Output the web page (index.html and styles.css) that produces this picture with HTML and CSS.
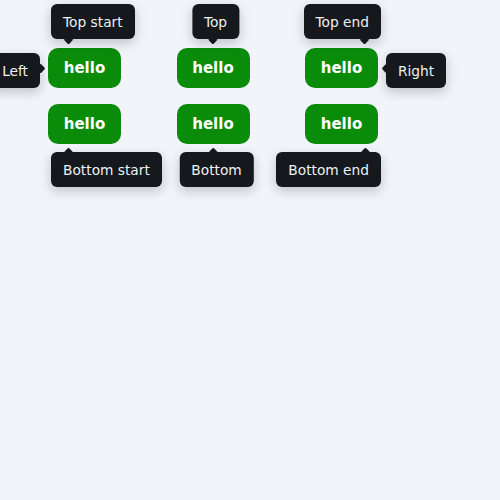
FILE: index.html
```html
<!DOCTYPE html>
<html>
<head>
<meta charset="utf-8">
<link rel="stylesheet" href="styles.css">
</head>
<body>
<div class="grid">
  <div class="cell">
    <button class="btn">hello</button>
    <div class="tip tip-left">Left</div>
    <div class="tip tip-top-start">Top start</div>
  </div>
  <div class="cell">
    <button class="btn">hello</button>
    <div class="tip tip-top">Top</div>
  </div>
  <div class="cell">
    <button class="btn">hello</button>
    <div class="tip tip-top-end">Top end</div>
    <div class="tip tip-right">Right</div>
  </div>
  <div class="cell">
    <button class="btn">hello</button>
    <div class="tip tip-bottom-start">Bottom start</div>
  </div>
  <div class="cell">
    <button class="btn">hello</button>
    <div class="tip tip-bottom">Bottom</div>
  </div>
  <div class="cell">
    <button class="btn">hello</button>
    <div class="tip tip-bottom-end">Bottom end</div>
  </div>
</div>
</body>
</html>
```

FILE: styles.css
```css
html, body {
  margin: 0;
  padding: 0;
  background: #f1f4f8;
  width: 500px;
  height: 500px;
  overflow: hidden;
  font-family: "DejaVu Sans", "Noto Sans", sans-serif;
}

.grid {
  display: grid;
  grid-template-columns: repeat(3, 73px);
  column-gap: 55.5px;
  row-gap: 16px;
  padding: 48px 0 0 48px;
}

.cell {
  position: relative;
}

.btn {
  display: block;
  box-sizing: border-box;
  width: 73px;
  height: 40px;
  padding: 1px 0 0;
  border: none;
  border-radius: 10px;
  background: #0a8c0a;
  color: #ffffff;
  text-align: center;
  font-family: "DejaVu Sans", "Noto Sans", sans-serif;
  font-weight: bold;
  font-size: 15px;
  line-height: 39px;
}

.tip {
  position: absolute;
  box-sizing: border-box;
  height: 35px;
  padding: 1px 12px 0;
  border-radius: 6px;
  background: #15191e;
  color: #eef0f2;
  font-size: 13.75px;
  line-height: 34px;
  white-space: nowrap;
  box-shadow: 0 4px 12px rgba(15, 23, 42, 0.22);
  z-index: 2;
}

.tip::after {
  content: "";
  position: absolute;
  width: 7px;
  height: 7px;
  background: #15191e;
  border-radius: 1.5px;
  transform: rotate(45deg);
}

/* top */
.tip-top-start { left: 3px; bottom: calc(100% + 9px); }
.tip-top { left: calc(50% + 2.5px); transform: translateX(-50%); bottom: calc(100% + 9px); }
.tip-top-end { right: -3px; bottom: calc(100% + 9px); }
.tip-top-start::after,
.tip-top::after,
.tip-top-end::after { bottom: -3.5px; }
.tip-top-start::after { left: 13.5px; }
.tip-top::after { left: calc(50% - 6px); }
.tip-top-end::after { right: 13.5px; }

/* bottom */
.tip-bottom-start { left: 3px; top: calc(100% + 8px); }
.tip-bottom { left: calc(50% + 3.5px); transform: translateX(-50%); top: calc(100% + 8px); }
.tip-bottom-end { right: -3px; top: calc(100% + 8px); }
.tip-bottom-start::after,
.tip-bottom::after,
.tip-bottom-end::after { top: -3.5px; }
.tip-bottom-start::after { left: 13.5px; }
.tip-bottom::after { left: calc(50% - 7px); }
.tip-bottom-end::after { right: 12.5px; }

/* sides */
.tip-left { right: calc(100% + 8px); top: 5px; }
.tip-right { left: calc(100% + 8px); top: 5px; }
.tip-left::after { right: -3.5px; top: 11.5px; }
.tip-right::after { left: -3.5px; top: 11.5px; }
```
